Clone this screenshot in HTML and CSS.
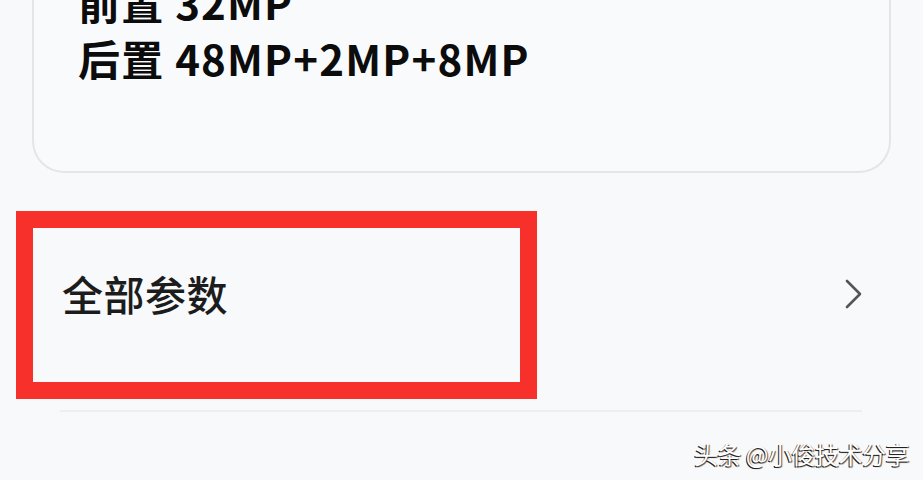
FILE: index.html
```html
<!DOCTYPE html>
<html lang="zh-CN">
<head>
    <meta charset="UTF-8">
    <meta name="viewport" content="width=device-width, initial-scale=1.0">
    <title>全部参数</title>
    <link rel="stylesheet" href="styles.css">
</head>
<body>
    <div class="page">
        <div class="spec-card">
            <p class="spec-line">前置 32MP</p>
            <p class="spec-line">后置 48MP+2MP+8MP</p>
        </div>

        <div class="params-row">
            <span class="params-title">全部参数</span>
            <svg class="chevron" width="18" height="30" viewBox="0 0 18 30">
                <path d="M2 2 L15 15 L2 28" fill="none" stroke="#555" stroke-width="2.6" stroke-linecap="round" stroke-linejoin="round"/>
            </svg>
            <div class="highlight-box"></div>
        </div>
        <div class="divider"></div>

        <div class="watermark">头条 @小俊技术分享</div>
    </div>
</body>
</html>
```

FILE: styles.css
```css
* {
    margin: 0;
    padding: 0;
    box-sizing: border-box;
}

html, body {
    height: 100%;
}

body {
    font-family: "Noto Sans CJK SC", "Noto Sans", sans-serif;
    background: #f8f9fb;
    color: #111;
    overflow: hidden;
}

.page {
    position: relative;
    display: flow-root;
    height: 480px;
}

.spec-card {
    margin: -60px 32px 0;
    padding: 34px 44px 85px;
    border: 2px solid #e4e5e8;
    border-top: none;
    border-radius: 0 0 32px 32px;
    background: #f9fafc;
}

.spec-line {
    font-size: 42px;
    font-weight: 700;
    line-height: 56px;
    letter-spacing: 1.2px;
    color: #0c0c0c;
}

.params-row {
    position: relative;
    display: flex;
    align-items: center;
    justify-content: space-between;
    height: 237px;
    padding: 3px 60px 0 62px;
}

.params-title {
    font-size: 41px;
    font-weight: 500;
    color: #1c1c1c;
    letter-spacing: 0.5px;
}

.chevron {
    margin-top: 2px;
}

/* red annotation over the row */
.highlight-box {
    position: absolute;
    left: 16px;
    top: 38px;
    width: 521px;
    height: 188px;
    border: 17px solid #f8302b;
}

.divider {
    height: 2px;
    margin: 0 61px 0 60px;
    background: #eceef1;
}

.watermark {
    position: absolute;
    right: 14px;
    top: 436px;
    font-size: 24px;
    color: #fff;
    letter-spacing: -0.5px;
    text-shadow: -1px 1px 0 #222, 1px 1px 1px rgba(0, 0, 0, 0.7);
}
```
